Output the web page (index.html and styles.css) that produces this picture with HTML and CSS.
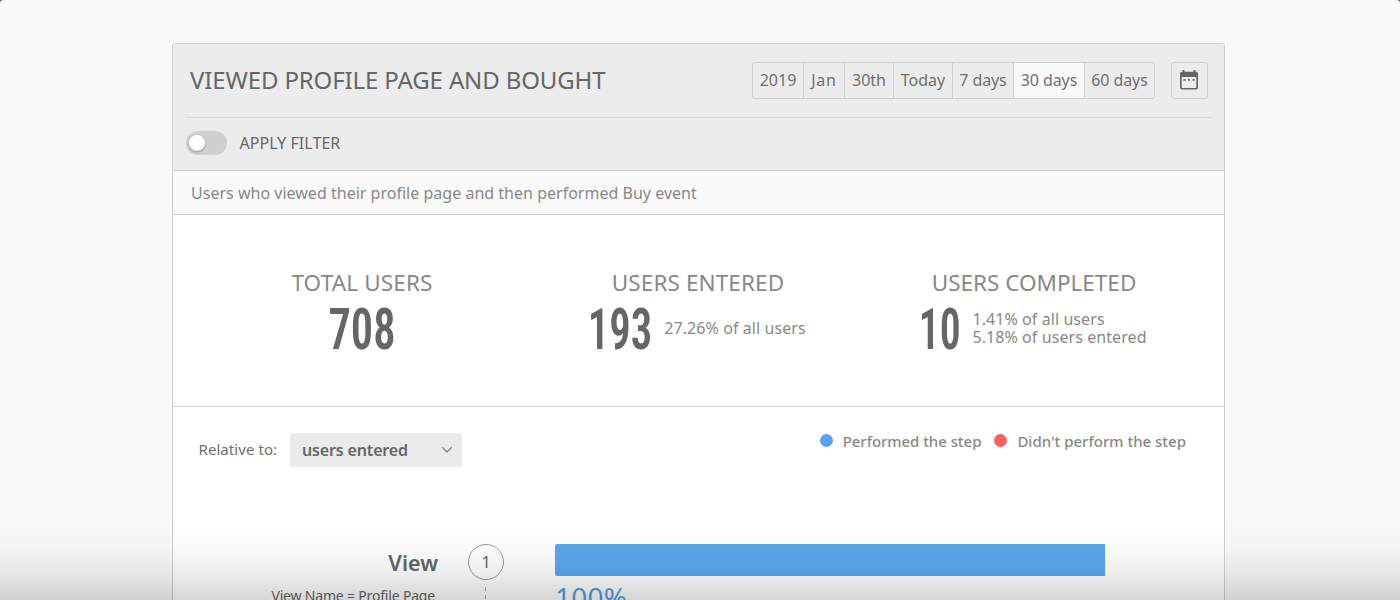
FILE: index.html
```html
<!DOCTYPE html>
<html lang="en">
<head>
<meta charset="utf-8">
<title>Viewed profile page and bought</title>
<link rel="stylesheet" href="styles.css">
</head>
<body>
<div class="window">
  <main class="card">
    <header class="card-header">
      <div class="title-row">
        <h1 class="title">VIEWED PROFILE PAGE AND BOUGHT</h1>
        <div class="periods">
          <span class="period p-year">2019</span>
          <span class="period p-month">Jan</span>
          <span class="period p-date">30th</span>
          <span class="period p-today">Today</span>
          <span class="period p-week">7 days</span>
          <span class="period p-30 selected">30 days</span>
          <span class="period p-60">60 days</span>
        </div>
        <div class="calendar">
          <svg width="20" height="20" viewBox="0 0 20 20">
            <path fill="#666" fill-rule="evenodd" d="M3.500 0h2v1.700h9V0h2v1.700h.5a2 2 0 0 1 2 2V17.500a2 2 0 0 1-2 2H3a2 2 0 0 1-2-2V3.700a2 2 0 0 1 2-2h.5zM2.700 7v10.300q0 .6.6.6h13.400q.6 0 .6-.6V7z"/>
            <path fill="#666" d="M4.500 9h2v1.800h-2zM9 9h2v1.800H9zM13.500 9h2v1.800h-2z"/>
          </svg>
        </div>
      </div>
      <div class="filter-row">
        <span class="toggle"><span class="knob"></span></span>
        <span class="filter-label">APPLY FILTER</span>
      </div>
    </header>
    <p class="description">Users who viewed their profile page and then performed Buy event</p>
    <section class="stats">
      <div class="stat">
        <div class="stat-name total">TOTAL USERS</div>
        <div class="stat-row"><span class="number w3"><b>708</b></span></div>
      </div>
      <div class="stat">
        <div class="stat-name entered">USERS ENTERED</div>
        <div class="stat-row"><span class="number w3 narrow"><b>193</b></span><div class="notes">27.26% of all users</div></div>
      </div>
      <div class="stat">
        <div class="stat-name">USERS COMPLETED</div>
        <div class="stat-row"><span class="number w2"><b>10</b></span><div class="notes"><div>1.41% of all users</div><div>5.18% of users entered</div></div></div>
      </div>
    </section>
    <section class="funnel">
      <div class="tools">
        <span class="relative">Relative to:</span>
        <div class="select"><span>users entered</span>
          <svg width="12" height="8" viewBox="0 0 12 8"><path d="M1.200 1.300L6 6l4.800-4.700" fill="none" stroke="#888" stroke-width="1.300"/></svg>
        </div>
        <div class="legend">
          <i class="dot blue"></i><span class="performed">Performed the step</span>
          <i class="dot red"></i><span>Didn't perform the step</span>
        </div>
      </div>
      <div class="step">
        <div class="step-text">
          <div class="step-name">View</div>
          <div class="step-detail">View Name = Profile Page</div>
        </div>
        <div class="marker"><span class="circle">1</span><span class="dash"></span></div>
        <div class="result">
          <div class="bar"></div>
          <div class="percent">100%</div>
        </div>
      </div>
    </section>
  </main>
  <div class="fade"></div>
</div>
</body>
</html>
```
FILE: styles.css
```css
* { box-sizing: border-box; }
html { background: #777; }
body { margin: 0; height: 600px; overflow: hidden; font-family: "Noto Sans", "Open Sans", sans-serif; font-size: 16px; color: #666; }
.window { position: relative; height: 600px; overflow: hidden; background: #f9f9f9; border-radius: 4px 4px 0 0; padding: 43px 175px 0 172px; }
.card { height: 620px; border: 1px solid #cfcfcf; border-radius: 3px; background: #fff; overflow: hidden; }
.card-header { height: 127px; background: #ececec; border-bottom: 1px solid #d0d0d0; padding: 0 12px 0 13px; }
.title-row { height: 74px; display: flex; align-items: center; padding: 0 4px; border-bottom: 1px solid #d9d9d9; }
.title { margin: 0; padding-bottom: 2px; font-size: 24px; font-weight: 400; letter-spacing: -.13px; line-height: 36px; white-space: nowrap; }
.periods { margin-left: auto; display: flex; height: 37px; border: 1px solid #d0d0d0; border-radius: 3px; color: #707070; overflow: hidden; }
.period { line-height: 35px; text-align: center; border-right: 1px solid #d0d0d0; white-space: nowrap; }
.period:last-child { border-right: 0; }
.p-year { width: 51px; }
.p-month { width: 41px; letter-spacing: .8px; }
.p-date { width: 49px; }
.p-today { width: 59px; }
.p-week { width: 61px; letter-spacing: -.1px; }
.p-30 { width: 71px; letter-spacing: -.1px; }
.p-60 { width: 69px; letter-spacing: -.1px; }
.selected { background: #fafafa; }
.calendar { width: 37px; height: 37px; margin-left: 16px; border: 1px solid #d0d0d0; border-radius: 3px; display: flex; align-items: center; justify-content: center; padding: 0 1px 2px 0; }
.filter-row { display: flex; align-items: center; height: 50px; }
.toggle { width: 41px; height: 24px; border-radius: 12px; background: #cfcfcf; padding: 4px 3px; }
.knob { display: block; width: 16px; height: 16px; border-radius: 50%; background: #fff; box-shadow: 0 1px 2px rgba(0,0,0,.35); }
.filter-label { margin-left: 12.500px; letter-spacing: .05px; }
.description { margin: 0; height: 44px; padding-left: 18px; line-height: 44px; background: #fafafa; border-bottom: 1px solid #d0d0d0; color: #888; letter-spacing: .015px; }
.stats { height: 192px; padding: 52px 21px 0; display: grid; grid-template-columns: repeat(3, 336px); border-bottom: 1px solid #d0d0d0; color: #888; }
.stat { text-align: center; }
.stat-name { font-size: 22.500px; line-height: 31px; }
.total { letter-spacing: .15px; }
.entered { letter-spacing: .1px; }
.stat-row { display: flex; justify-content: center; align-items: center; height: 60px; }
.number { display: flex; justify-content: center; padding-top: 3px; font-family: "Roboto Condensed", Roboto, sans-serif; font-size: 57px; line-height: 60px; color: #666; }
.number b { font-weight: 600; transform: scaleX(.78); }
.w3 { width: 66px; }
.narrow { width: 60px; }
.narrow b { transform: scaleX(.75); }
.w2 { width: 37px; }
.w2 b { transform: scaleX(.73); }
.notes { margin-left: 14px; line-height: 18px; text-align: left; white-space: nowrap; letter-spacing: .08px; }
.tools { display: flex; height: 60px; padding: 26px 38px 0 25.500px; }
.relative { width: 91.500px; font-size: 15px; line-height: 33px; color: #707070; letter-spacing: .07px; }
.select { width: 172px; height: 34px; padding: 0 9px 0 12px; display: flex; align-items: center; justify-content: space-between; background: #ebebeb; font-weight: 600; letter-spacing: -.15px; }
.legend { margin-left: auto; height: 15px; display: flex; align-items: center; font-size: 15px; font-weight: 500; color: #888; white-space: nowrap; }
.dot { width: 13px; height: 13px; border-radius: 50%; }
.blue { background: #58a5ec; margin-right: 10px; }
.red { background: #f56262; margin: 0 10px 0 13px; }
.performed { letter-spacing: -.05px; }
.step { display: flex; padding-top: 77px; }
.step-text { width: 265px; text-align: right; white-space: nowrap; }
.step-name { height: 36px; line-height: 37px; font-size: 21.500px; font-weight: 600; }
.step-detail { font-size: 14px; line-height: 20px; margin-top: 6px; padding-right: 3px; letter-spacing: -.18px; }
.marker { width: 36px; margin-left: 30px; display: flex; flex-direction: column; align-items: center; }
.circle { width: 36px; height: 36px; border: 1px solid #999; border-radius: 50%; background: #fff; text-align: center; font-size: 17px; line-height: 34px; }
.dash { margin-top: 7px; height: 34px; width: 1px; margin-right: 1px; background: repeating-linear-gradient(#aaa 0 4px, transparent 4px 8px); }
.result { margin-left: 51px; }
.bar { width: 550px; height: 32px; border-radius: 2px 0 0 2px; background: #5ba8ef; }
.percent { font-size: 28px; line-height: 38px; margin-top: 2px; color: #539fe6; letter-spacing: .2px; }
.fade { position: absolute; left: 0; right: 0; bottom: 0; height: 82px; background: linear-gradient(rgba(0,0,0,0), rgba(0,0,0,.018) 35%, rgba(0,0,0,.065) 65%, rgba(0,0,0,.16)); }
```
